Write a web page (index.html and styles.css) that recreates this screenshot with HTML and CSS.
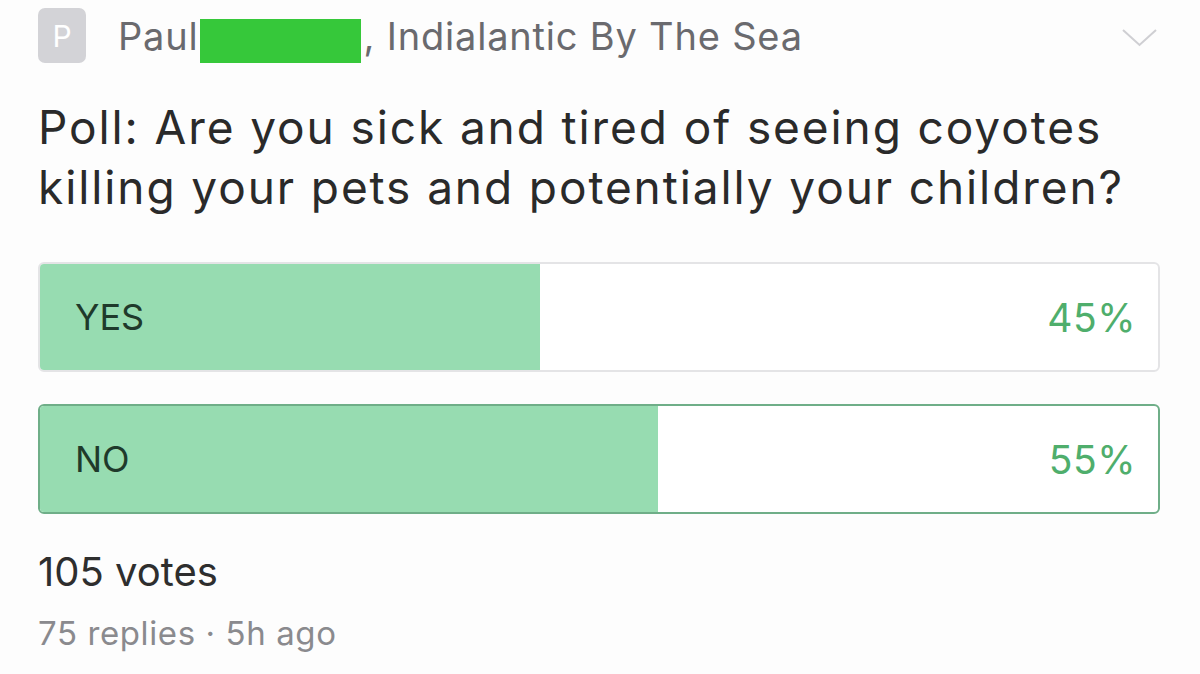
FILE: index.html
```html
<!DOCTYPE html>
<html lang="en">
<head>
  <meta charset="UTF-8">
  <meta name="viewport" content="width=device-width, initial-scale=1.0">
  <title>Poll</title>
  <link rel="stylesheet" href="styles.css">
</head>
<body>
  <div class="post">
    <div class="post-head">
      <div class="avatar">P</div>
      <div class="author">Paul<span class="redact"></span>, Indialantic By The Sea</div>
      <svg class="chevron" width="37" height="20" viewBox="0 0 37 20">
        <polyline points="2,2 18.5,17 35,2" fill="none" stroke="#cfcfd3" stroke-width="2" />
      </svg>
    </div>

    <div class="question">Poll: Are you sick and tired of seeing coyotes killing your pets and potentially your children?</div>

    <div class="options">
      <div class="option">
        <div class="fill" style="width: 44.7%"></div>
        <span class="label">YES</span>
        <span class="pct">45%</span>
      </div>
      <div class="option picked">
        <div class="fill" style="width: 55.3%"></div>
        <span class="label">NO</span>
        <span class="pct">55%</span>
      </div>
    </div>

    <div class="votes">105 votes</div>
    <div class="meta">75 replies · 5h ago</div>
  </div>
</body>
</html>
```

FILE: styles.css
```css
html,
body {
  height: 100%;
  overflow: hidden;
}

body {
  margin: 0;
  background: #fdfdfd;
  font-family: Inter, "Liberation Sans", sans-serif;
  color: #2b2b2b;
}

.post {
  padding: 8px 40px 0 38px;
}

.post-head {
  display: flex;
  align-items: center;
  height: 55px;
}

.avatar {
  width: 48px;
  height: 55px;
  border-radius: 7px;
  background: #d3d3d7;
  color: #fff;
  font-size: 30px;
  display: flex;
  align-items: center;
  justify-content: center;
}

.author {
  flex: 1;
  margin-left: 32px;
  font-size: 38px;
  letter-spacing: 0.8px;
  color: #6a6a6e;
  display: flex;
  align-items: center;
}

.redact {
  display: inline-block;
  width: 161px;
  height: 44px;
  margin: 10px 2px 0 2px;
  background: #36c83a;
}

.chevron {
  margin-right: 2px;
  margin-top: 4px;
}

.question {
  margin-top: 34px;
  font-size: 46px;
  letter-spacing: 1.9px;
  line-height: 60px;
  color: #2a2a2a;
}

.options {
  margin-top: 45px;
  display: flex;
  flex-direction: column;
  gap: 32px;
}

.option {
  position: relative;
  height: 106px;
  border: 2px solid #e4e4e6;
  border-radius: 6px;
  background: #fff;
  display: flex;
  align-items: center;
  justify-content: space-between;
  padding: 0 22px 0 35px;
  overflow: hidden;
}

.option.picked {
  border-color: #6fae88;
}

.fill {
  position: absolute;
  left: 0;
  top: 0;
  bottom: 0;
  background: #97dcb1;
}

.label,
.pct {
  position: relative;
}

.label {
  font-size: 36px;
  color: #1f3a2b;
}

.pct {
  font-size: 39px;
  letter-spacing: 0.5px;
  color: #4fae6c;
}

.votes {
  margin-top: 33px;
  font-size: 40px;
  color: #2e2e2e;
}

.meta {
  margin-top: 17px;
  font-size: 33px;
  letter-spacing: 0.6px;
  color: #8a8a8e;
}
```
